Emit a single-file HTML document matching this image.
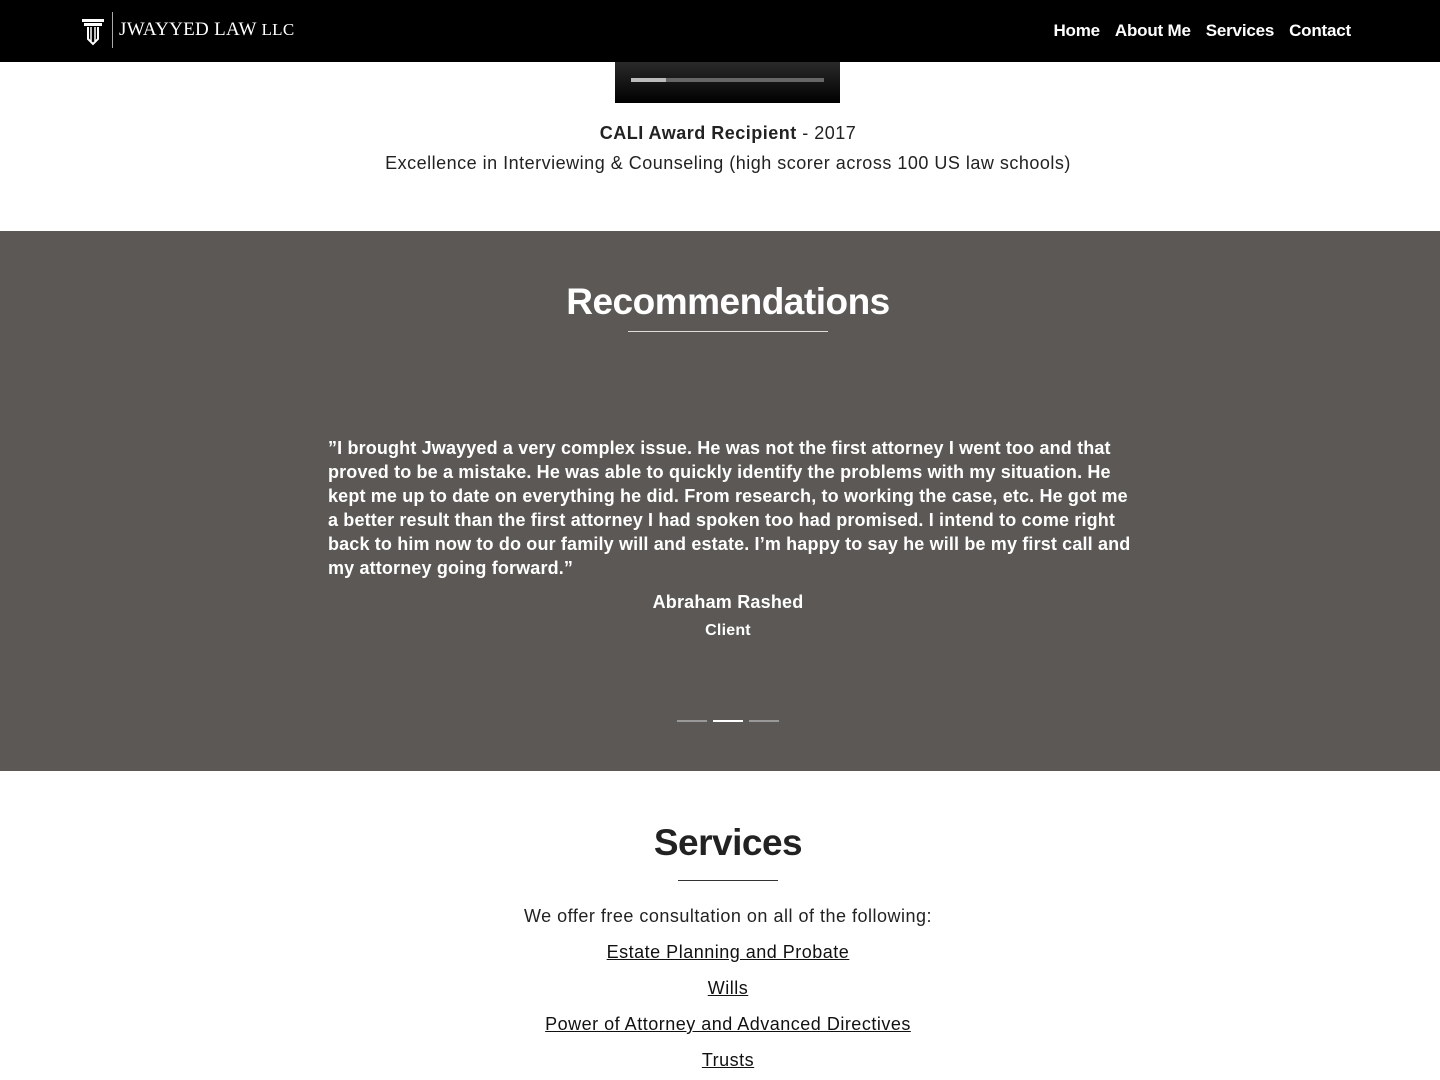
<!DOCTYPE html>
<html><head><meta charset="utf-8"><style>
*{margin:0;padding:0;box-sizing:border-box}
body{width:1440px;height:1080px;overflow:hidden;font-family:"Liberation Sans",sans-serif;background:#fff;color:#222;position:relative}
.nav{position:absolute;top:0;left:0;width:1440px;height:62px;background:#000}
.logo{position:absolute;left:80px;top:12px;display:flex;align-items:center;color:#fff}
.logo .txt{font-family:"Liberation Serif",serif;font-size:19px;letter-spacing:0.3px;margin-left:6px;border-left:1px solid #aaa;padding-left:6px;height:36px;line-height:36px}
.links{position:absolute;right:89px;top:21px;color:#fff;font-weight:bold;font-size:17px;letter-spacing:-0.2px}
.links span{margin-left:15px}
.video{position:absolute;left:615px;top:62px;width:225px;height:41px;background:linear-gradient(#2a2a2a,#000)}
.bar{position:absolute;left:16px;top:16px;width:193px;height:4px;background:#666}
.bar i{display:block;width:35px;height:4px;background:#bbb}
.c{position:absolute;left:8px;width:1440px;text-align:center}
.t{font-size:18px;letter-spacing:0.5px}
.rec{position:absolute;top:231px;left:0;width:1440px;height:540px;background:#5b5855;color:#fff}
h2{font-size:37px;font-weight:bold;letter-spacing:-0.5px}
.quote{position:absolute;left:328px;top:205px;font-weight:bold;font-size:18px;line-height:24px;white-space:nowrap;letter-spacing:0.15px}
.dots{position:absolute;top:488px;left:677px}
.dots i{display:inline-block;width:30px;height:2px;background:#999;margin-right:6px;vertical-align:top}
a{color:#111;text-decoration:underline}
</style></head><body>
<div class="nav">
 <div class="logo">
  <svg width="26" height="34" viewBox="0 0 26 34"><path d="M2 6h22v3H2z M4 10h18v3H4z" fill="#fff"/><path d="M8 14v12l5 5 5-5V14" fill="none" stroke="#fff" stroke-width="2"/><path d="M11 14v14M15 14v14" stroke="#fff" stroke-width="1.5"/></svg>
  <div class="txt">JWAYYED LAW <span style="font-size:17px">LLC</span></div>
 </div>
 <div class="links"><span>Home</span><span>About Me</span><span>Services</span><span>Contact</span></div>
</div>
<div class="video"><div class="bar"><i></i></div></div>
<div class="c t" style="top:123px"><b>CALI Award Recipient</b> - 2017</div>
<div class="c t" style="top:153px">Excellence in Interviewing &amp; Counseling (high scorer across 100 US law schools)</div>
<div class="rec">
 <div class="c" style="top:50px"><h2>Recommendations</h2></div>
 <div style="position:absolute;left:628px;top:100px;width:200px;height:1px;background:#ddd"></div>
 <div class="quote">”I brought Jwayyed a very complex issue. He was not the first attorney I went too and that<br>proved to be a mistake. He was able to quickly identify the problems with my situation. He<br>kept me up to date on everything he did. From research, to working the case, etc. He got me<br>a better result than the first attorney I had spoken too had promised. I intend to come right<br>back to him now to do our family will and estate. I’m happy to say he will be my first call and<br>my attorney going forward.”</div>
 <div class="c" style="top:361px;font-weight:bold;font-size:18px;letter-spacing:0.2px">Abraham Rashed</div>
 <div class="c" style="top:391px;font-weight:bold;font-size:16px;letter-spacing:0.2px">Client</div>
 <div class="dots" style="top:489px"><i></i><i style="background:#fff"></i><i></i></div>
</div>
<div class="c" style="top:822px"><h2 style="color:#222">Services</h2></div>
<div style="position:absolute;left:678px;top:880px;width:100px;height:1px;background:#333"></div>
<div class="c t" style="top:906px">We offer free consultation on all of the following:</div>
<div class="c t" style="top:942px"><a>Estate Planning and Probate</a></div>
<div class="c t" style="top:978px"><a>Wills</a></div>
<div class="c t" style="top:1014px"><a>Power of Attorney and Advanced Directives</a></div>
<div class="c t" style="top:1050px"><a>Trusts</a></div>
</body></html>
